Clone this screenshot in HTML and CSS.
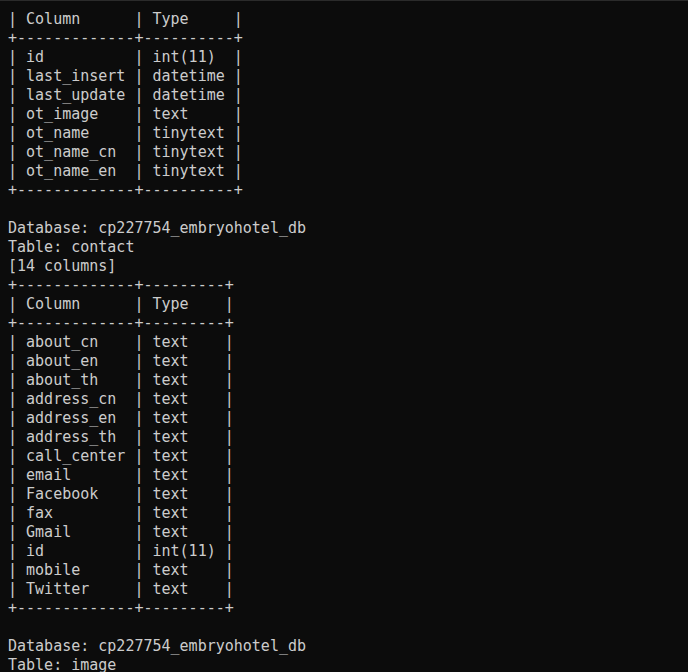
FILE: index.html
```html
<!DOCTYPE html>
<html>
<head>
<meta charset="utf-8">
<link rel="stylesheet" href="styles.css">
</head>
<body>
<pre class="term">| Column      | Type     |
+-------------+----------+
| id          | int(11)  |
| last_insert | datetime |
| last_update | datetime |
| ot_image    | text     |
| ot_name     | tinytext |
| ot_name_cn  | tinytext |
| ot_name_en  | tinytext |
+-------------+----------+

Database: cp227754_embryohotel_db
Table: contact
[14 columns]
+-------------+---------+
| Column      | Type    |
+-------------+---------+
| about_cn    | text    |
| about_en    | text    |
| about_th    | text    |
| address_cn  | text    |
| address_en  | text    |
| address_th  | text    |
| call_center | text    |
| email       | text    |
| Facebook    | text    |
| fax         | text    |
| Gmail       | text    |
| id          | int(11) |
| mobile      | text    |
| Twitter     | text    |
+-------------+---------+

Database: cp227754_embryohotel_db
Table: image</pre>
</body>
</html>
```
FILE: styles.css
```css
html, body {
  margin: 0;
  padding: 0;
  background: #0c0c0c;
  height: 100%;
  overflow: hidden;
}
body {
  border-top: 1px solid #2b2b2b;
  box-sizing: border-box;
}
.term {
  margin: 0;
  padding: 9px 0 0 8px;
  font-family: "DejaVu Sans Mono", "Liberation Mono", monospace;
  font-size: 15px;
  line-height: 19px;
  color: #cccccc;
  white-space: pre;
}
```
